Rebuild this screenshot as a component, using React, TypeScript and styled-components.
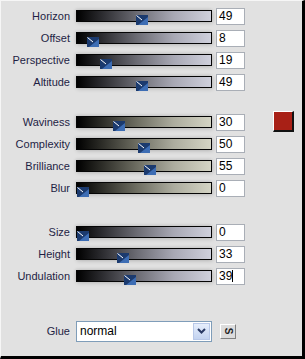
import React from "react";
import styled, { createGlobalStyle } from "styled-components";

const Global = createGlobalStyle`
  html, body { margin: 0; padding: 0; background: #e1e1e1; }
  body { font-family: "Liberation Sans", Arial, sans-serif; }
`;

const Panel = styled.div`
  box-sizing: border-box;
  width: 305px;
  height: 359px;
  background: #e1e1e1;
  border-top: 1px solid #f6f6f6;
  border-left: 1px solid #f6f6f6;
  border-right: 3px solid #000;
  border-bottom: 3px solid #000;
  padding-top: 4px;
  display: flex;
  flex-direction: column;
`;

const Group = styled.div<{ $mt: number }>`
  display: flex;
  margin-top: ${(p) => p.$mt}px;
`;

const Rows = styled.div`
  display: flex;
  flex-direction: column;
`;

const Row = styled.div`
  display: flex;
  align-items: center;
  height: 22px;
`;

const Label = styled.div`
  width: 69px;
  text-align: right;
  font-size: 11px;
  color: #1e1e44;
  line-height: 12px;
`;

const Track = styled.div<{ $tone: "gray" | "beige" }>`
  position: relative;
  box-sizing: border-box;
  width: 136px;
  height: 12px;
  margin-left: 6px;
  border: 1px solid #050505;
  background: ${(p) =>
    p.$tone === "gray"
      ? "linear-gradient(to right, #000 0%, #2a2a2e 18%, #6c6c74 45%, #a8a8b4 72%, #cfd0dc 100%)"
      : "linear-gradient(to right, #000 0%, #2b2b26 18%, #6e6e62 45%, #acac9e 72%, #d4d4c4 100%)"};
  box-shadow: 1px 1px 4px rgba(0, 0, 0, 0.18), -1px -1px 3px rgba(0, 0, 0, 0.08);
`;

const ThumbWrap = styled.div`
  position: absolute;
  top: 0;
  width: 12px;
  height: 10px;
`;

const NumBox = styled.div`
  box-sizing: border-box;
  width: 29px;
  height: 17px;
  margin-left: 4px;
  background: #fff;
  border: 1px solid #a9aeb6;
  font-size: 12px;
  line-height: 15px;
  padding-left: 2px;
  color: #000;
  display: flex;
  align-items: center;
`;

const Caret = styled.span`
  display: inline-block;
  width: 1px;
  height: 12px;
  background: #000;
`;

const Swatch = styled.div`
  box-sizing: border-box;
  width: 21px;
  height: 21px;
  margin-left: 28px;
  margin-top: 0px;
  background: #a82016;
  border-top: 1px solid #fff;
  border-left: 1px solid #fff;
  border-right: 2px solid #111;
  border-bottom: 2px solid #111;
`;

const GlueRow = styled.div`
  display: flex;
  align-items: center;
  height: 22px;
  margin-top: 33px;
`;

const Select = styled.div`
  box-sizing: border-box;
  width: 136px;
  height: 21px;
  margin-left: 6px;
  border: 1px solid #7f9db9;
  background: #fff;
  display: flex;
  align-items: center;
  padding: 1px;
`;

const SelectText = styled.div`
  flex: 1;
  font-size: 12px;
  color: #000;
  padding-left: 2px;
`;

const DropBtn = styled.div`
  box-sizing: border-box;
  width: 17px;
  height: 17px;
  background: linear-gradient(to bottom, #e6eefc, #c3d3f0);
  border: 1px solid #b8c8e8;
  display: flex;
  align-items: center;
  justify-content: center;
`;

const SBtn = styled.div`
  box-sizing: border-box;
  width: 16px;
  height: 15px;
  margin-left: 8px;
  background: #dcdcdc;
  border-top: 1px solid #fff;
  border-left: 1px solid #fff;
  border-right: 1px solid #808080;
  border-bottom: 1px solid #808080;
  display: flex;
  align-items: center;
  justify-content: center;
  font-size: 10px;
  font-weight: bold;
  color: #222;
`;

const SGlyph = styled.span`
  display: inline-block;
  transform: rotate(90deg);
  line-height: 10px;
`;

function Thumb({ value }: { value: number }) {
  return (
    <ThumbWrap style={{ left: `${Math.round(value * 1.21)}px` }}>
      <svg width="12" height="10" viewBox="0 0 12 10">
        <rect x="0" y="0" width="12" height="10" fill="#1b3a6e" />
        <polygon points="2,10 12,2 12,10" fill="#3d6db4" />
        <line x1="0.5" y1="0.5" x2="6" y2="5" stroke="#fff" strokeWidth="1" />
      </svg>
    </ThumbWrap>
  );
}

type Item = { label: string; value: number; caret?: boolean };

function Slider({ item, tone }: { item: Item; tone: "gray" | "beige" }) {
  return (
    <Row>
      <Label>{item.label}</Label>
      <Track $tone={tone}>
        <Thumb value={item.value} />
      </Track>
      <NumBox>
        {item.value}
        {item.caret && <Caret />}
      </NumBox>
    </Row>
  );
}

const g1: Item[] = [
  { label: "Horizon", value: 49 },
  { label: "Offset", value: 8 },
  { label: "Perspective", value: 19 },
  { label: "Altitude", value: 49 },
];
const g2: Item[] = [
  { label: "Waviness", value: 30 },
  { label: "Complexity", value: 50 },
  { label: "Brilliance", value: 55 },
  { label: "Blur", value: 0 },
];
const g3: Item[] = [
  { label: "Size", value: 0 },
  { label: "Height", value: 33 },
  { label: "Undulation", value: 39, caret: true },
];

export default function App() {
  return (
    <>
      <Global />
      <Panel>
        <Group $mt={0}>
          <Rows>
            {g1.map((i) => (
              <Slider key={i.label} item={i} tone="gray" />
            ))}
          </Rows>
        </Group>
        <Group $mt={18}>
          <Rows>
            {g2.map((i) => (
              <Slider key={i.label} item={i} tone="beige" />
            ))}
          </Rows>
          <Swatch />
        </Group>
        <Group $mt={22}>
          <Rows>
            {g3.map((i) => (
              <Slider key={i.label} item={i} tone="gray" />
            ))}
          </Rows>
        </Group>
        <GlueRow>
          <Label>Glue</Label>
          <Select>
            <SelectText>normal</SelectText>
            <DropBtn>
              <svg width="9" height="6" viewBox="0 0 9 6">
                <polyline points="1,1 4.5,4.5 8,1" fill="none" stroke="#2a3a64" strokeWidth="2" />
              </svg>
            </DropBtn>
          </Select>
          <SBtn>
            <SGlyph>S</SGlyph>
          </SBtn>
        </GlueRow>
      </Panel>
    </>
  );
}
